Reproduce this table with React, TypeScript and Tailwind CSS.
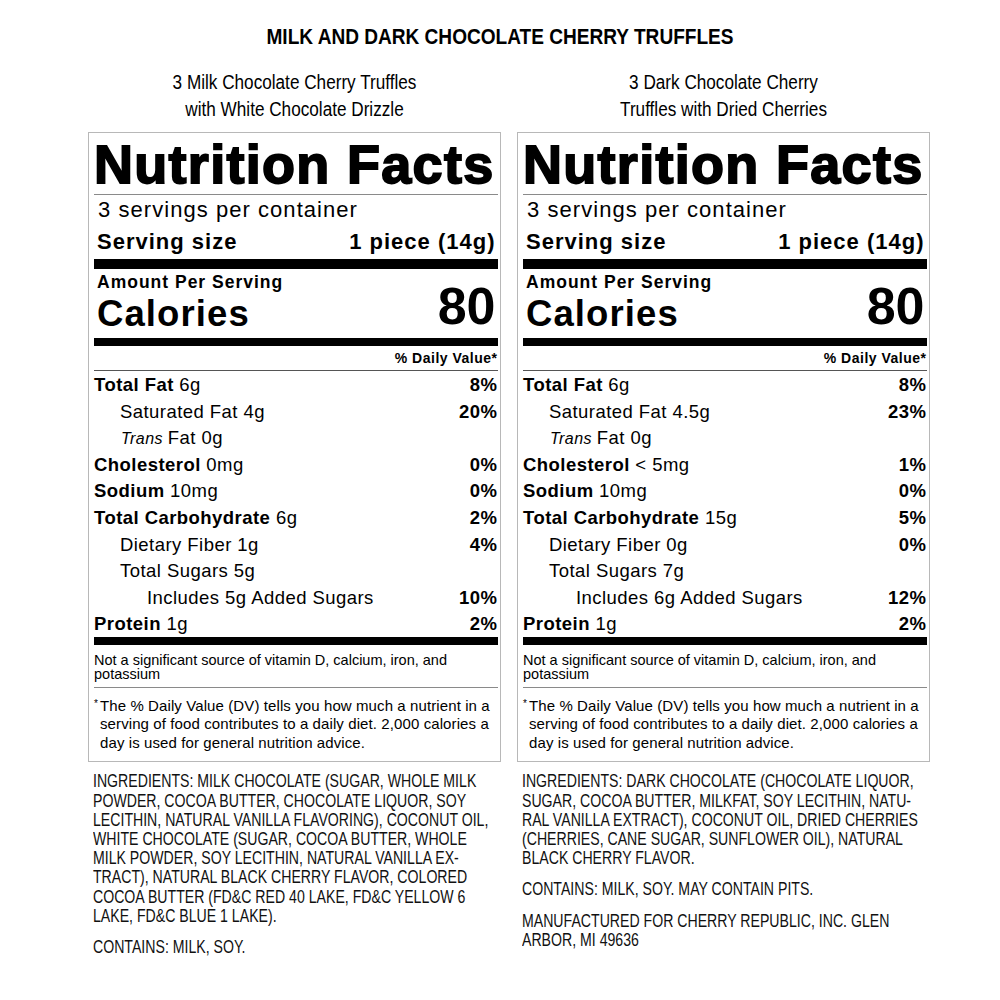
type Row = {
  label: string;
  amount: string;
  dv?: string;
  bold?: boolean;
  trans?: boolean;
  indent?: 0 | 1 | 2;
  line: "thin" | "thick" | "short" | "none";
};

type Panel = {
  subtitle: string[];
  rows: Row[];
  ingredients: string[][];
};

const panels: Panel[] = [
  {
    subtitle: ["3 Milk Chocolate Cherry Truffles", "with White Chocolate Drizzle"],
    rows: [
      { label: "Total Fat", amount: "6g", dv: "8%", bold: true, line: "thick" },
      { label: "Saturated Fat", amount: "4g", dv: "20%", indent: 1, line: "thin" },
      { label: "Fat", amount: "0g", trans: true, indent: 1, line: "thin" },
      { label: "Cholesterol", amount: "0mg", dv: "0%", bold: true, line: "thin" },
      { label: "Sodium", amount: "10mg", dv: "0%", bold: true, line: "thin" },
      { label: "Total Carbohydrate", amount: "6g", dv: "2%", bold: true, line: "thick" },
      { label: "Dietary Fiber", amount: "1g", dv: "4%", indent: 1, line: "thin" },
      { label: "Total Sugars", amount: "5g", indent: 1, line: "short" },
      { label: "Includes 5g Added Sugars", amount: "", dv: "10%", indent: 2, line: "thin" },
      { label: "Protein", amount: "1g", dv: "2%", bold: true, line: "none" },
    ],
    ingredients: [
      [
        "INGREDIENTS: MILK CHOCOLATE (SUGAR, WHOLE MILK",
        "POWDER, COCOA BUTTER, CHOCOLATE LIQUOR, SOY",
        "LECITHIN, NATURAL VANILLA FLAVORING), COCONUT OIL,",
        "WHITE CHOCOLATE (SUGAR, COCOA BUTTER, WHOLE",
        "MILK POWDER, SOY LECITHIN, NATURAL VANILLA EX-",
        "TRACT), NATURAL BLACK CHERRY FLAVOR, COLORED",
        "COCOA BUTTER (FD&C RED 40 LAKE, FD&C YELLOW 6",
        "LAKE, FD&C BLUE 1 LAKE).",
      ],
      ["CONTAINS: MILK, SOY."],
    ],
  },
  {
    subtitle: ["3 Dark Chocolate Cherry", "Truffles with Dried Cherries"],
    rows: [
      { label: "Total Fat", amount: "6g", dv: "8%", bold: true, line: "thick" },
      { label: "Saturated Fat", amount: "4.5g", dv: "23%", indent: 1, line: "thin" },
      { label: "Fat", amount: "0g", trans: true, indent: 1, line: "thin" },
      { label: "Cholesterol", amount: "< 5mg", dv: "1%", bold: true, line: "thin" },
      { label: "Sodium", amount: "10mg", dv: "0%", bold: true, line: "thin" },
      { label: "Total Carbohydrate", amount: "15g", dv: "5%", bold: true, line: "thick" },
      { label: "Dietary Fiber", amount: "0g", dv: "0%", indent: 1, line: "thin" },
      { label: "Total Sugars", amount: "7g", indent: 1, line: "short" },
      { label: "Includes 6g Added Sugars", amount: "", dv: "12%", indent: 2, line: "thin" },
      { label: "Protein", amount: "1g", dv: "2%", bold: true, line: "none" },
    ],
    ingredients: [
      [
        "INGREDIENTS: DARK CHOCOLATE (CHOCOLATE LIQUOR,",
        "SUGAR, COCOA BUTTER, MILKFAT, SOY LECITHIN, NATU-",
        "RAL VANILLA EXTRACT), COCONUT OIL, DRIED CHERRIES",
        "(CHERRIES, CANE SUGAR, SUNFLOWER OIL), NATURAL",
        "BLACK CHERRY FLAVOR.",
      ],
      ["CONTAINS: MILK, SOY. MAY CONTAIN PITS."],
      ["MANUFACTURED FOR CHERRY REPUBLIC, INC. GLEN", "ARBOR, MI 49636"],
    ],
  },
];

function NutrientRow({ row }: { row: Row }) {
  const indent = row.indent === 2 ? "pl-[53px]" : row.indent === 1 ? (row.trans ? "pl-[27px]" : "pl-[26px]") : "pl-0";
  return (
    <div className="flex h-[26.6px] flex-col">
      <div className={`flex flex-1 items-center justify-between text-[18.5px] tracking-[0.45px] ${indent}`}>
        <span className="whitespace-nowrap">
          {row.trans && <i className="text-[16px]">Trans </i>}
          {row.bold ? <b>{row.label}</b> : row.label}
          {row.amount && ` ${row.amount}`}
        </span>
        {row.dv && <b>{row.dv}</b>}
      </div>
      {row.line === "thin" && <div className="h-px bg-[#555]" />}
      {row.line === "thick" && <div className="h-[2px] bg-[#a8a8a8]" />}
      {row.line === "short" && <div className="ml-[50px] h-px bg-[#555]" />}
    </div>
  );
}

function Label({ panel }: { panel: Panel }) {
  return (
    <div className="w-[413px] border border-[#b8b8b8] pl-[5px] pr-[2.5px] font-['Liberation_Sans',Arial,sans-serif] text-black">
      <div className="h-[62px] border-b border-[#8a8a8a] pt-[1px]">
        <div className="whitespace-nowrap text-[54px] font-bold leading-[60px] tracking-[1.3px] [-webkit-text-stroke:1.8px_black]">
          Nutrition Facts
        </div>
      </div>
      <div className="h-[29px] pl-[4px] text-[22px] leading-[29px] tracking-[1.05px]">3 servings per container</div>
      <div className="flex h-[35px] items-center justify-between pl-[3px] pr-[2px] text-[22px] font-bold leading-[35px] tracking-[1px]">
        <span>Serving size</span>
        <span>1 piece (14g)</span>
      </div>
      <div className="h-[10px] bg-black" />
      <div className="flex h-[69px] justify-between pl-[3px] pr-[2px]">
        <div className="flex flex-col pt-[3px] font-bold">
          <div className="text-[17.5px] leading-[20px] tracking-[1px]">Amount Per Serving</div>
          <div className="text-[36.5px] leading-[44px] tracking-[1.1px]">Calories</div>
        </div>
        <div className="pt-[12.5px] text-[52px] font-bold leading-[50px]">80</div>
      </div>
      <div className="h-[8px] bg-black" />
      <div className="h-[25px] border-b border-[#555] pt-[1.5px] text-right text-[14px] font-bold leading-[23px] tracking-[0.5px]">
        % Daily Value*
      </div>
      {panel.rows.map((row) => (
        <NutrientRow key={row.label} row={row} />
      ))}
      <div className="h-[8px] bg-black" />
      <div className="h-[43px] border-b border-[#8a8a8a] pt-[8px] text-[14.5px] leading-[14px]">
        <div className="whitespace-nowrap">Not a significant source of vitamin D, calcium, iron, and</div>
        <div>potassium</div>
      </div>
      <div className="flex h-[73px] pt-[9px] text-[15px] leading-[18.3px] tracking-[0.1px]">
        <span className="w-[6px] shrink-0 text-[10px] leading-[14px]">*</span>
        <div className="whitespace-nowrap">
          <div>The % Daily Value (DV) tells you how much a nutrient in a</div>
          <div>serving of food contributes to a daily diet. 2,000 calories a</div>
          <div>day is used for general nutrition advice.</div>
        </div>
      </div>
    </div>
  );
}

export default function App() {
  return (
    <div className="min-h-[1000px] w-[1000px] bg-white font-['Liberation_Sans',Arial,sans-serif] text-black">
      <div className="origin-center scale-x-[0.855] whitespace-nowrap pt-[25px] text-center text-[22.3px] font-bold leading-[24px]">
        MILK AND DARK CHOCOLATE CHERRY TRUFFLES
      </div>
      <div className="flex gap-[16px] pl-[88px] pt-[19.7px]">
        {panels.map((panel) => (
          <div key={panel.subtitle[0]} className="flex w-[413px] flex-col">
            <div className="h-[63.3px] text-center text-[20px] leading-[27px]">
              {panel.subtitle.map((line) => (
                <div key={line} className="origin-center scale-x-[0.858] whitespace-nowrap">
                  {line}
                </div>
              ))}
            </div>
            <Label panel={panel} />
            <div className="flex flex-col gap-[12px] pl-[5px] pt-[9.5px] text-[19px] leading-[19.2px] text-[#111]">
              {panel.ingredients.map((para, i) => (
                <div key={i}>
                  {para.map((line) => (
                    <div key={line} className="origin-left scale-x-[0.743] whitespace-nowrap">
                      {line}
                    </div>
                  ))}
                </div>
              ))}
            </div>
          </div>
        ))}
      </div>
    </div>
  );
}
